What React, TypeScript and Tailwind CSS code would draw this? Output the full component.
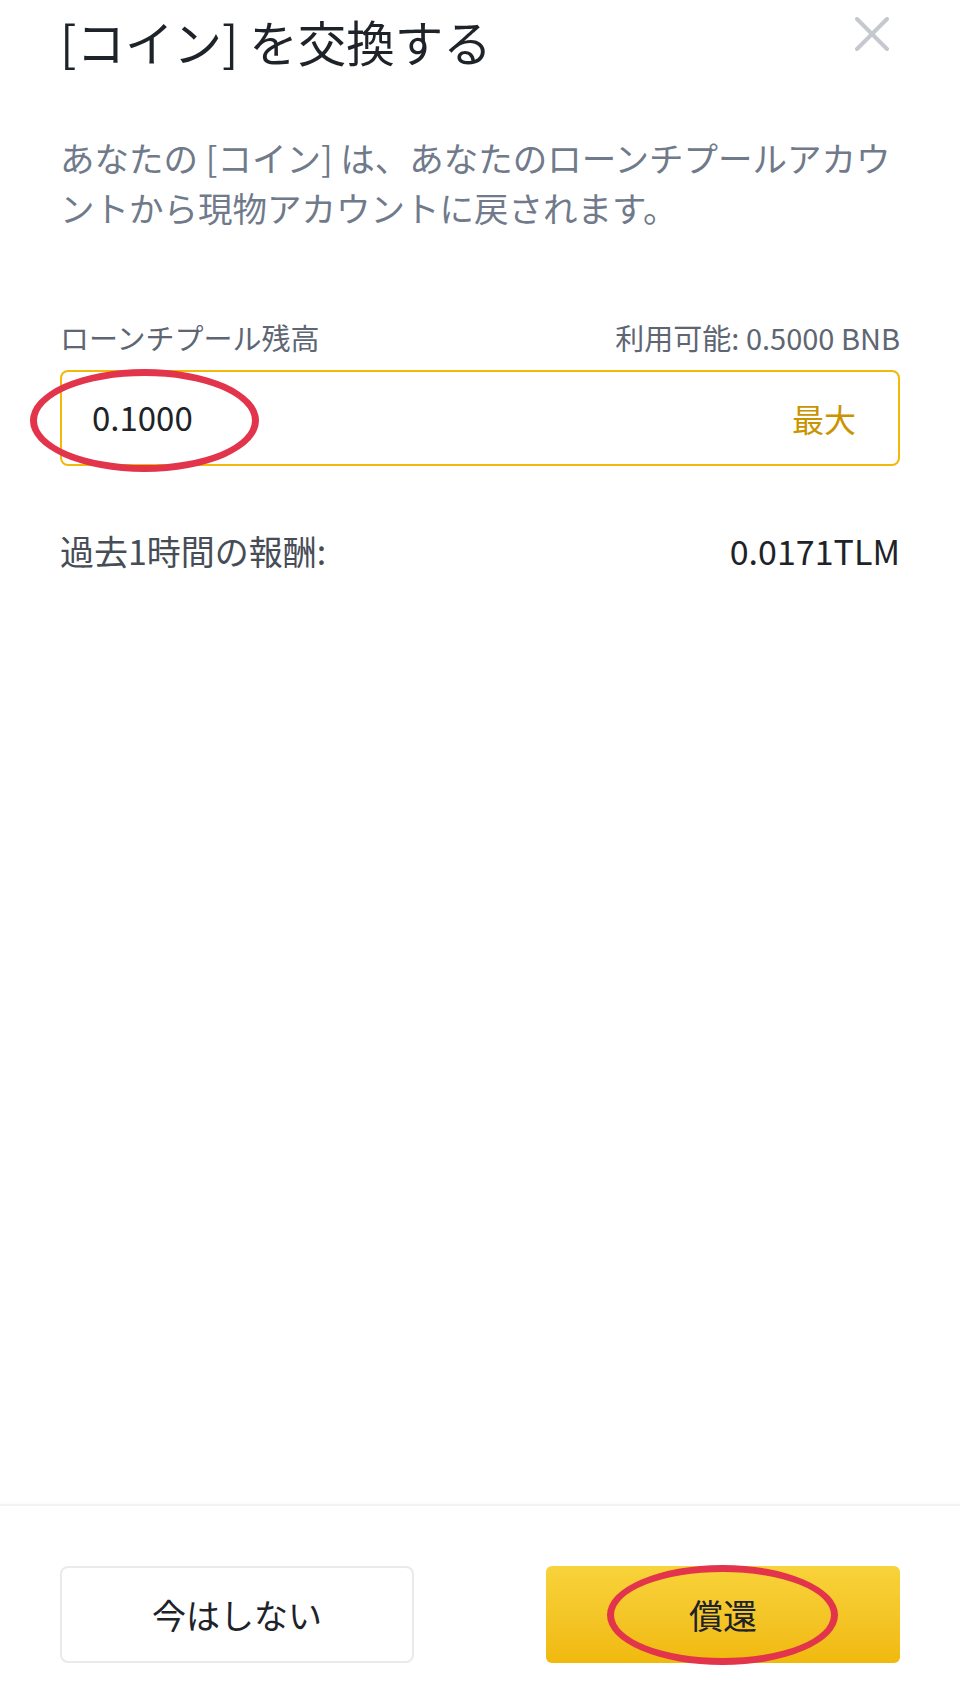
import React from 'react'

const jp = { fontFamily: '"Noto Sans CJK JP", "Noto Sans", sans-serif' }

function CloseIcon() {
  return (
    <svg width="34" height="34" viewBox="0 0 34 34" fill="none">
      <path d="M2 2L32 32M32 2L2 32" stroke="#c5c9cf" strokeWidth="4" strokeLinecap="round" />
    </svg>
  )
}

function Circle({ className }: { className: string }) {
  return (
    <div
      className={`pointer-events-none absolute rounded-[50%] border-[7px] border-[#e2344b] ${className}`}
    />
  )
}

export default function App() {
  return (
    <div style={jp} className="flex h-[1706px] w-[960px] flex-col bg-white text-[#1e2329]">
      <main className="flex-1 px-[60px] pt-[13px]">
        <div className="flex items-start justify-between">
          <h1 className="text-[48.5px] leading-[56px] font-normal">[コイン] を交換する</h1>
          <div className="mr-[11px] mt-[4px]">
            <CloseIcon />
          </div>
        </div>

        <p className="mt-[63px] text-[34.5px] leading-[50px] text-[#707a8a] whitespace-nowrap">
          あなたの [コイン] は、あなたのローンチプールアカウ
          <br />
          ントから現物アカウントに戻されます。
        </p>

        <div className="mt-[85px] flex items-center justify-between text-[29px] leading-[40px] text-[#5e6673]">
          <span>ローンチプール残高</span>
          <span>利用可能: 0.5000 BNB</span>
        </div>

        <div className="relative mt-[13px] flex h-[96px] items-center justify-between rounded-[8px] border-2 border-[#f0b90b] pl-[30px] pr-[42px]">
          <span className="text-[33px] text-[#1e2329]">0.1000</span>
          <span className="text-[32px] text-[#c99400]">最大</span>
          <Circle className="-left-[32px] -top-[3px] h-[103px] w-[229px]" />
        </div>

        <div className="mt-[63px] flex items-center justify-between text-[34px] leading-[44px]">
          <span className="text-[#474d57]">過去1時間の報酬:</span>
          <span className="text-[#1e2329]">0.0171TLM</span>
        </div>
      </main>

      <footer className="flex justify-between border-t-2 border-[#f2f3f4] px-[60px] pt-[60px] pb-[43px] shadow-[0_-2px_4px_rgba(0,0,0,0.02)]">
        <button className="flex h-[97px] w-[354px] items-center justify-center rounded-[8px] border-2 border-[#e9eaec] bg-white text-[34px] text-[#1e2329]">
          今はしない
        </button>
        <button className="relative flex h-[97px] w-[354px] items-center justify-center rounded-[6px] bg-gradient-to-b from-[#f8d33a] to-[#f0b90b] text-[34px] text-[#1e2329]">
          償還
          <Circle className="left-[61px] -top-[1px] h-[100px] w-[231px]" />
        </button>
      </footer>
    </div>
  )
}
